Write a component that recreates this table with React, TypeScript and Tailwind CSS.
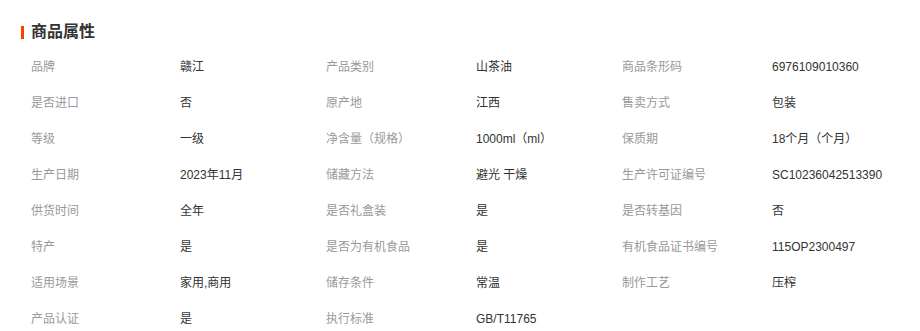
import React from "react";

const rows: [string, string, string, string, string, string][] = [
  ["品牌", "赣江", "产品类别", "山茶油", "商品条形码", "6976109010360"],
  ["是否进口", "否", "原产地", "江西", "售卖方式", "包装"],
  ["等级", "一级", "净含量（规格）", "1000ml（ml）", "保质期", "18个月（个月）"],
  ["生产日期", "2023年11月", "储藏方法", "避光 干燥", "生产许可证编号", "SC10236042513390"],
  ["供货时间", "全年", "是否礼盒装", "是", "是否转基因", "否"],
  ["特产", "是", "是否为有机食品", "是", "有机食品证书编号", "115OP2300497"],
  ["适用场景", "家用,商用", "储存条件", "常温", "制作工艺", "压榨"],
  ["产品认证", "是", "执行标准", "GB/T11765", "", ""],
];

export default function App() {
  return (
    <div
      className="w-[920px] h-[331px] overflow-hidden bg-white pl-[21px] pt-[21px]"
      style={{ fontFamily: '"Liberation Sans", "Noto Sans CJK SC", sans-serif' }}
    >
      <div className="flex items-center h-[22px]">
        <div className="w-[3px] h-[13px] bg-[#ff3c00] mr-[7px]" />
        <div className="text-[16px] font-bold text-[#333] leading-[22px]">商品属性</div>
      </div>
      <div className="mt-[6px] pl-[10px] grid grid-cols-[295px_296px_1fr] text-[12px]">
        {rows.map((r, i) => (
          <React.Fragment key={i}>
            <div className="flex items-center h-[36px]">
              <div className="w-[149px] text-[#999]">{r[0]}</div>
              <div className="text-[#333]">{r[1]}</div>
            </div>
            <div className="flex items-center h-[36px]">
              <div className="w-[150px] text-[#999]">{r[2]}</div>
              <div className="text-[#333]">{r[3]}</div>
            </div>
            <div className="flex items-center h-[36px]">
              <div className="w-[150px] text-[#999]">{r[4]}</div>
              <div className="text-[#333]">{r[5]}</div>
            </div>
          </React.Fragment>
        ))}
      </div>
    </div>
  );
}
